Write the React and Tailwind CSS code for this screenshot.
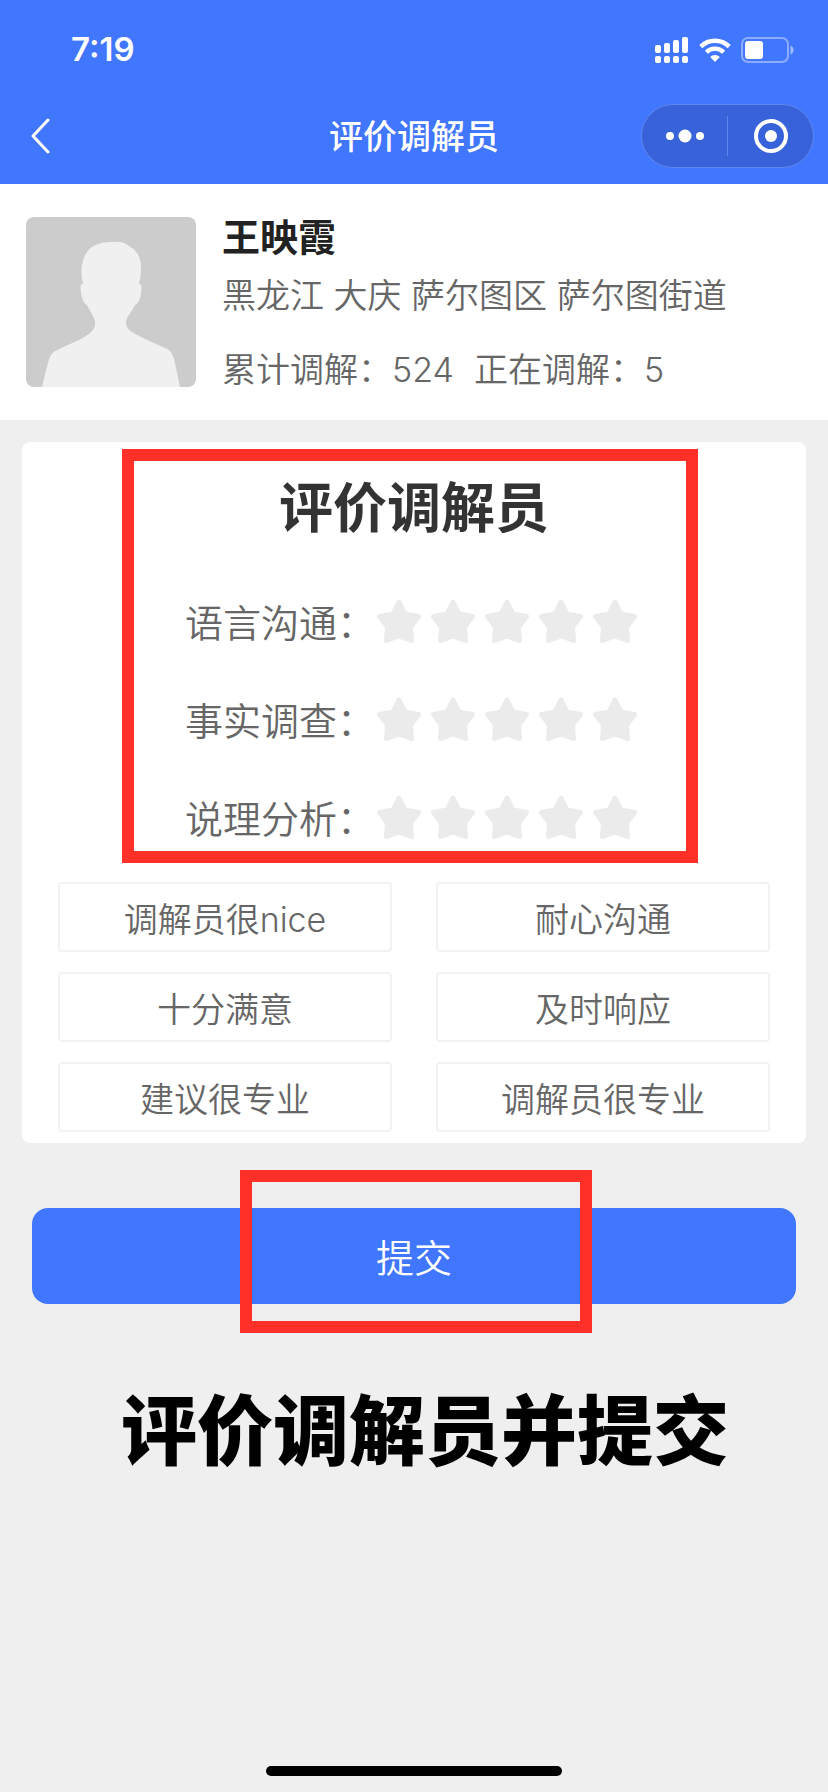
import { useState } from "react";
import clsx from "clsx";

const criteria = ["语言沟通", "事实调查", "说理分析"];

const tags = [
  "调解员很nice",
  "耐心沟通",
  "十分满意",
  "及时响应",
  "建议很专业",
  "调解员很专业",
];

const mediator = {
  name: "王映霞",
  area: "黑龙江 大庆 萨尔图区 萨尔图街道",
  total: 524,
  current: 5,
};

function SignalIcon() {
  return (
    <svg width="34" height="28" viewBox="0 0 34 28" fill="white" aria-hidden="true">
      <rect x="0" y="9" width="6" height="8" rx="2" />
      <rect x="9" y="7" width="6" height="10" rx="2" />
      <rect x="18" y="4" width="6" height="13" rx="2" />
      <rect x="27" y="1" width="6" height="16" rx="2" />
      <rect x="0" y="20" width="6" height="7" rx="2" />
      <rect x="9" y="20" width="6" height="7" rx="2" />
      <rect x="18" y="20" width="6" height="7" rx="2" />
      <rect x="27" y="20" width="6" height="7" rx="2" />
    </svg>
  );
}

function WifiIcon() {
  return (
    <svg width="32" height="24" viewBox="0 0 32 24" fill="none" stroke="white" aria-hidden="true">
      <path d="M1.8 8.6a20.2 20.2 0 0 1 28.4 0" strokeWidth="4.4" />
      <path d="M7.4 14.2a12.2 12.2 0 0 1 17.2 0" strokeWidth="4.4" />
      <path d="M16 24l-4.8-4.9a6.8 6.8 0 0 1 9.6 0z" fill="white" stroke="none" />
    </svg>
  );
}

function BatteryIcon() {
  return (
    <svg width="54" height="26" viewBox="0 0 54 26" fill="none" aria-hidden="true">
      <rect x="1" y="1" width="46" height="24" rx="6" stroke="white" strokeOpacity="0.4" strokeWidth="2" />
      <rect x="4" y="4" width="18" height="18" rx="3" fill="white" />
      <path d="M49.5 8.5c4 1.5 4 7.500 0 9z" fill="white" fillOpacity="0.5" />
    </svg>
  );
}

function Avatar() {
  return (
    <svg
      className="size-[170px] shrink-0 rounded-lg bg-[#cccccc]"
      viewBox="0 0 170 170"
      role="img"
      aria-label={mediator.name}
    >
      <path
        fill="#f0f0f0"
        d="M16 170L22 146C24 138 26 135 33 132L53 123C60 119 68 115 69 108C70 102 65 96 61 88C57 86 56 81 55 75C54 70 54 67 57 67C55 58 55 50 57 44C60 31 70 25 86 25C93 24 99 25 103 29C111 33 115 41 115 50C115 58 114 62 113 67C116 67 116 71 115 76C114 82 113 86 109 88C106 95 99 101 100 107C101 114 110 117 117 121L139 131C144 133 147 136 149 146L154 170Z"
      />
    </svg>
  );
}

function Star({ on }) {
  return (
    <svg
      className={clsx("size-[44px]", on ? "text-[#ffca3e]" : "text-[#ebebeb]")}
      viewBox="0 0 44 44"
      aria-hidden="true"
    >
      <path
        d="M22 3L28 15L41.500 17.500L33.500 28L34.500 41.500L22 37L9.500 41.500L10.500 28L2.500 17.500L16 15Z"
        fill="currentColor"
        stroke="currentColor"
        strokeWidth="5"
        strokeLinejoin="round"
      />
    </svg>
  );
}

function RatingRow({ label, value, onChange }) {
  return (
    <div
      className="flex h-[98px] items-center justify-center gap-[2px] pr-[6px]"
      role="group"
      aria-label={label}
    >
      <span className="pt-1 text-[38px]">{label}：</span>
      <div className="flex gap-[10px]">
        {[1, 2, 3, 4, 5].map((n) => (
          <button key={n} type="button" aria-label={`${label} ${n}`} onClick={() => onChange(n)}>
            <Star on={n <= value} />
          </button>
        ))}
      </div>
    </div>
  );
}

function Header() {
  return (
    <header className="h-[184px] bg-[#4176ff] text-white">
      <div className="flex h-[88px] items-center justify-between pt-3 pr-[33px] pl-[71px]">
        <span className="text-[33px] font-semibold">7:19</span>
        <div className="flex items-center gap-[10px]">
          <SignalIcon />
          <WifiIcon />
          <BatteryIcon />
        </div>
      </div>
      <div className="grid h-24 grid-cols-[1fr_auto_1fr] items-center px-[14px]">
        <button type="button" aria-label="返回" className="ml-4 justify-self-start">
          <svg width="20" height="36" viewBox="0 0 20 36" fill="none" stroke="white" strokeWidth="3">
            <path d="M18 2L3 18L18 34" strokeLinecap="round" strokeLinejoin="round" />
          </svg>
        </button>
        <h1 className="text-[34px] font-medium">评价调解员</h1>
        <div className="flex h-16 w-[173px] items-center justify-self-end rounded-full border border-[#5f86ea] bg-[#3862da]">
          <button type="button" aria-label="更多" className="flex flex-1 justify-center">
            <svg width="38" height="14" viewBox="0 0 38 14" fill="white">
              <circle cx="4" cy="7" r="4" />
              <circle cx="19" cy="7" r="6.500" />
              <circle cx="34" cy="7" r="4" />
            </svg>
          </button>
          <span className="h-10 w-px bg-[#5f86ea]" />
          <button type="button" aria-label="关闭" className="flex flex-1 justify-center">
            <svg width="34" height="34" viewBox="0 0 34 34" fill="white">
              <circle cx="17" cy="17" r="15" fill="none" stroke="white" strokeWidth="4" />
              <circle cx="17" cy="17" r="6" />
            </svg>
          </button>
        </div>
      </div>
    </header>
  );
}

export default function App() {
  const [scores, setScores] = useState({});
  const [picked, setPicked] = useState([]);

  const toggleTag = (tag) =>
    setPicked((prev) =>
      prev.includes(tag) ? prev.filter((t) => t !== tag) : [...prev, tag]
    );

  return (
    <div className="flex min-h-screen flex-col bg-[#efefef] font-['Inter','Noto_Sans_CJK_SC',sans-serif] font-[350] text-[#666666]">
      <Header />

      <section className="flex gap-[26px] bg-white px-[26px] pt-[33px] pb-[25px]">
        <Avatar />
        <div className="text-[34px] leading-[50px]">
          <h2 className="text-[38px] leading-[40px] font-bold text-[#222222]">{mediator.name}</h2>
          <p className="mt-[14px]">{mediator.area}</p>
          <p className="mt-6 flex gap-5">
            <span>累计调解：{mediator.total}</span>
            <span>正在调解：{mediator.current}</span>
          </p>
        </div>
      </section>

      <main className="flex flex-1 flex-col">
        <section className="relative mx-[22px] mt-[22px] rounded-lg bg-white px-9 pt-8 pb-[11px]">
          <h2 className="text-center text-[54px] leading-[70px] font-bold text-[#333333]">
            评价调解员
          </h2>
          <div className="mt-7">
            {criteria.map((label) => (
              <RatingRow
                key={label}
                label={label}
                value={scores[label] || 0}
                onChange={(n) => setScores({ ...scores, [label]: n })}
              />
            ))}
          </div>
          <div className="mt-4 grid grid-cols-2 gap-x-11 gap-y-5">
            {tags.map((tag) => (
              <button
                key={tag}
                type="button"
                aria-pressed={picked.includes(tag)}
                onClick={() => toggleTag(tag)}
                className={clsx(
                  "h-[70px] rounded border-2 pt-1 text-[34px]",
                  picked.includes(tag) ? "border-[#4176ff] text-[#4176ff]" : "border-[#f2f2f2]"
                )}
              >
                {tag}
              </button>
            ))}
          </div>
          <div className="pointer-events-none absolute top-[7px] right-[108px] left-[100px] h-[414px] border-[12px] border-[#ff3028]" />
        </section>

        <div className="relative mx-8 mt-[65px]">
          <button
            type="button"
            className="h-24 w-full rounded-2xl bg-[#4176ff] pt-1 text-[38px] text-white"
          >
            提交
          </button>
          <div className="pointer-events-none absolute -top-[38px] right-[204px] left-[208px] h-[163px] border-[12px] border-[#ff3028]" />
        </div>

        <p className="mt-[77px] pl-[22px] text-center text-[76px] leading-[100px] font-black text-black">
          评价调解员并提交
        </p>

        <div className="mx-auto mt-auto mb-4 h-[10px] w-[296px] rounded-full bg-black" />
      </main>
    </div>
  );
}
